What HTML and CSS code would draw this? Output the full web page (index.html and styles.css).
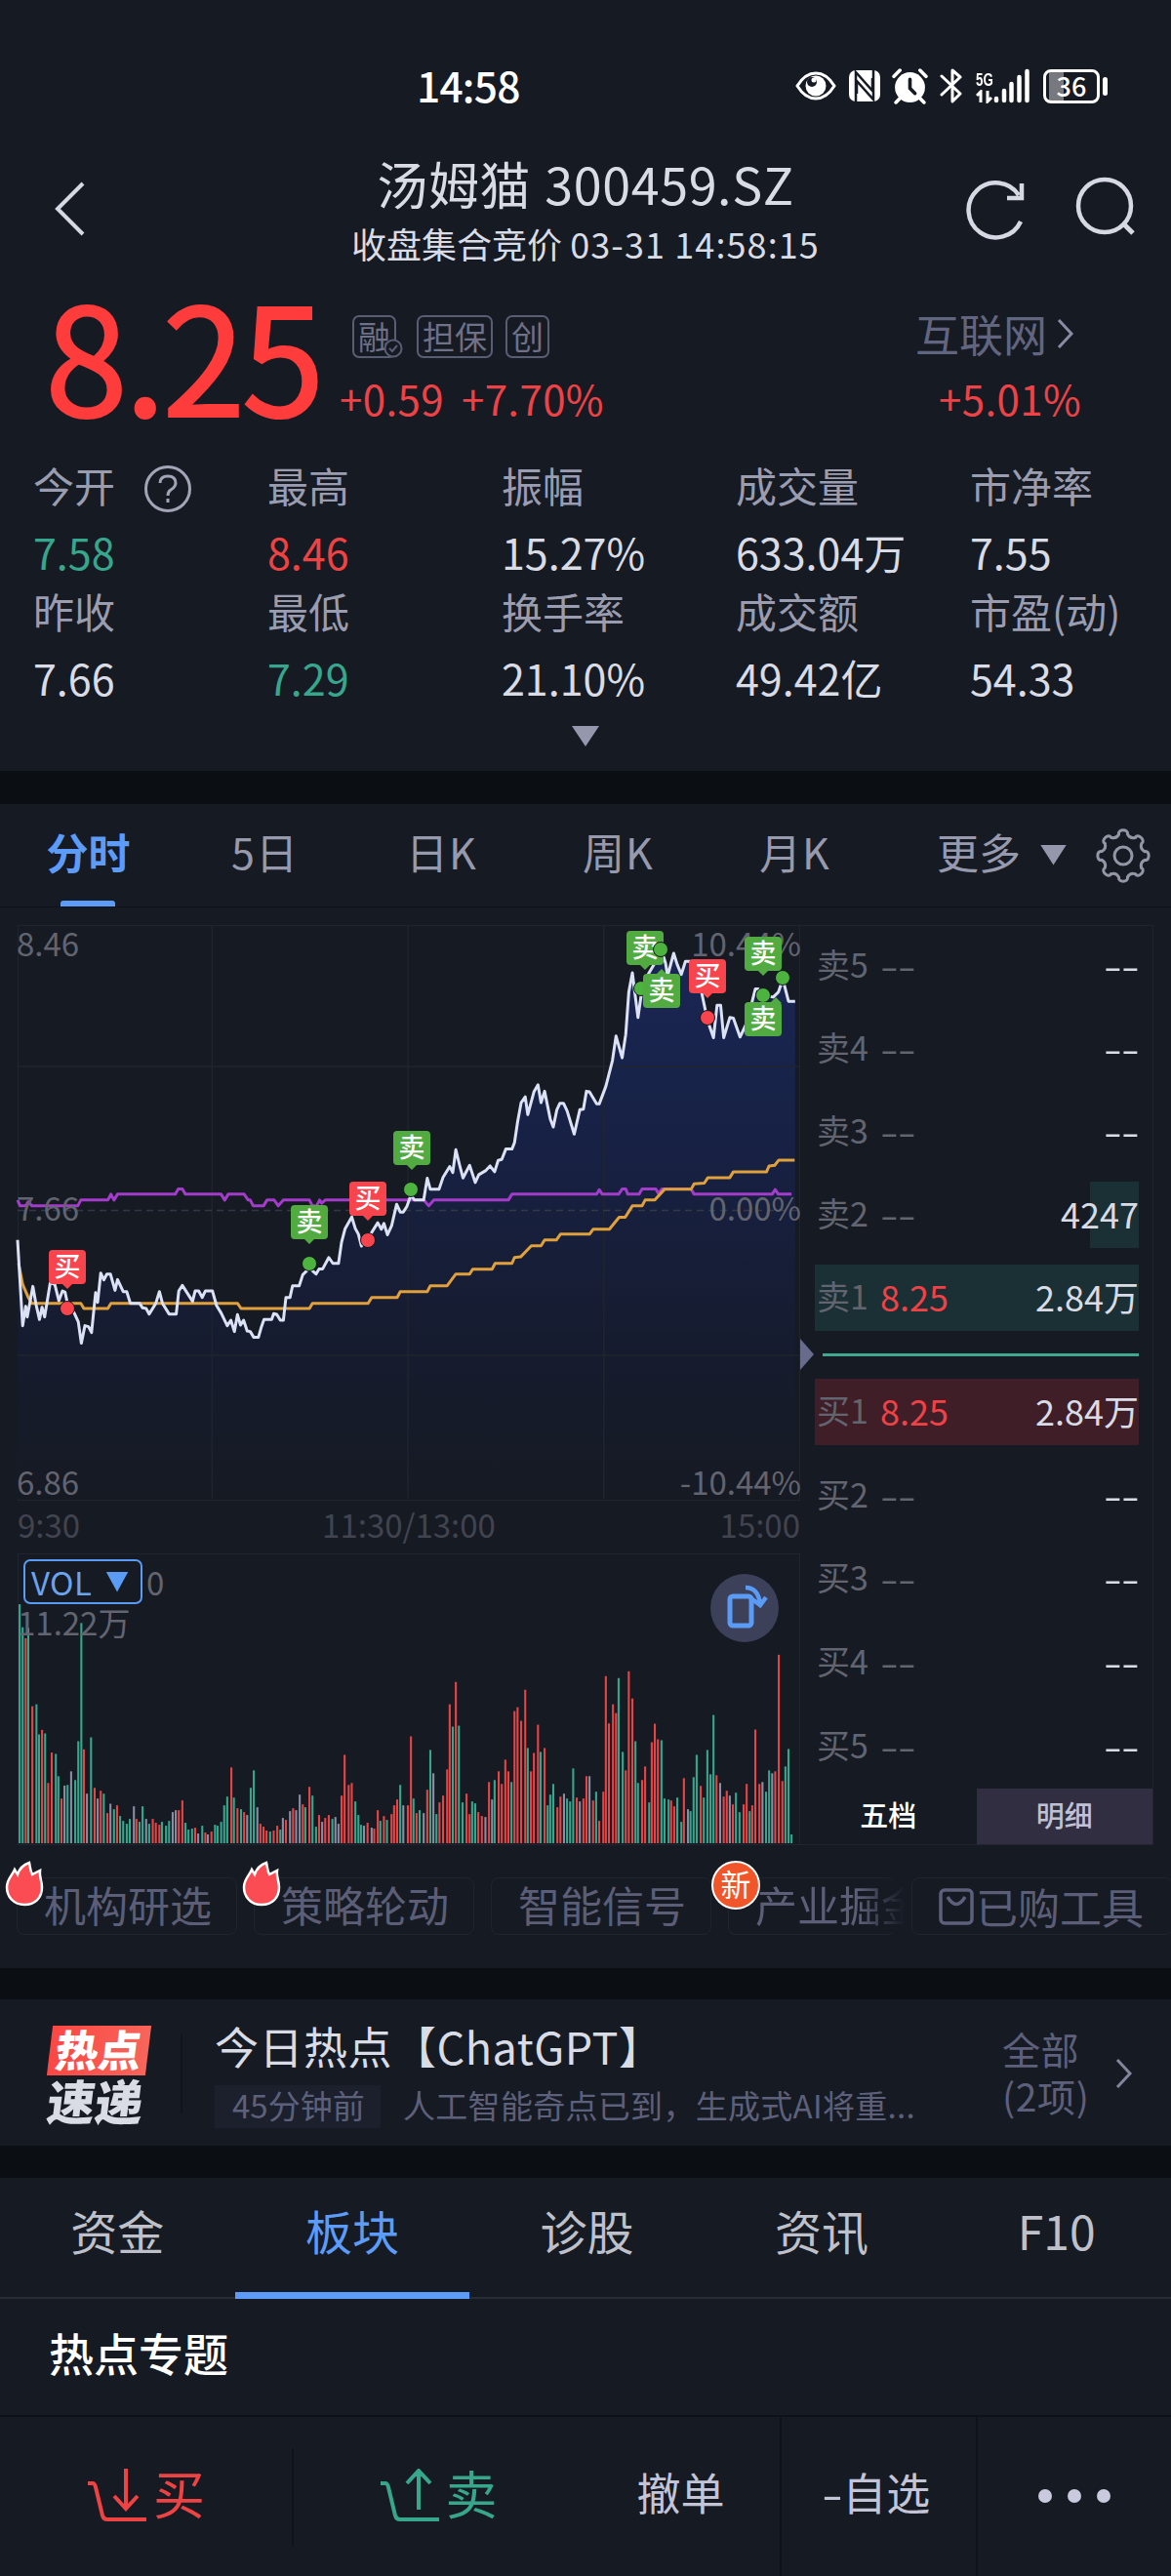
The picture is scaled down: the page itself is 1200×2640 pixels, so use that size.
FILE: index.html
```html
<!DOCTYPE html>
<html lang="zh-CN">
<head>
    <meta charset="utf-8">
    <title>汤姆猫 300459.SZ</title>
    <link rel="stylesheet" href="styles.css">
</head>
<body>
    <div class="status-bar">
        <span class="clock">14:58</span>
        <div class="status-icons">
            <svg class="ic-eye" viewBox="0 0 42 30"><path d="M2 15Q10 2 21 2T40 15Q32 28 21 28T2 15Z" fill="none" stroke="#fff" stroke-width="3"/><circle cx="21" cy="15" r="10.500" fill="#fff"/><circle cx="17" cy="11" r="5" fill="#161a23"/><circle cx="19" cy="9" r="2.500" fill="#fff"/></svg>
            <svg class="ic-nfc" viewBox="0 0 34 34"><rect x="1" y="1" width="32" height="32" rx="7" fill="#fff"/><path d="M8 33V3L25 22V9M26 1V31L9 12V25" fill="none" stroke="#161a23" stroke-width="2.500"/></svg>
            <svg class="ic-alarm" viewBox="0 0 36 36"><circle cx="18" cy="19" r="15" fill="#fff"/><path d="M2 8L8 2M34 8L28 2M8 30L4 34M28 30L32 34" stroke="#fff" stroke-width="3.500" stroke-linecap="round"/><path d="M18 11V20L23 25" fill="none" stroke="#161a23" stroke-width="3.500" stroke-linecap="round"/></svg>
            <svg class="ic-bt" viewBox="0 0 24 38"><path d="M2 9L21 27L13 35V3L21 10L2 28" fill="none" stroke="#fff" stroke-width="3" stroke-linejoin="round" stroke-linecap="round"/></svg>
            <div class="signal">
                <div class="net"><span>5G</span><svg viewBox="0 0 18 12"><path d="M5 12V1L1 5M12 0V11L16 7" fill="none" stroke="#fff" stroke-width="3"/></svg></div>
                <svg class="bars" viewBox="0 0 37 36"><path d="M3 31V33M11 23V33M18.500 16V33M26.500 9V33M34.500 3V33" stroke="#fff" stroke-width="4.500" stroke-linecap="round"/></svg>
            </div>
            <div class="battery"><span>36</span></div>
        </div>
    </div>

    <header class="title-bar">
        <svg class="back" viewBox="0 0 32 58"><path d="M29 3L3 29L29 55" fill="none" stroke="#d6d9e3" stroke-width="4"/></svg>
        <div class="title">
            <h1>汤姆猫 300459.SZ</h1>
            <p>收盘集合竞价 <span>03-31 14:58:15</span></p>
        </div>
        <div class="title-actions">
            <svg class="refresh" viewBox="0 0 62 62"><path d="M56 43A28 28 0 1 1 54 16M57 4V19H42" fill="none" stroke="#d6d9e3" stroke-width="4.500"/></svg>
            <svg class="search" viewBox="0 0 62 62"><circle cx="30" cy="30" r="27" fill="none" stroke="#d6d9e3" stroke-width="4.500"/><path d="M49 48L59 58" stroke="#d6d9e3" stroke-width="5"/></svg>
        </div>
    </header>

    <section class="quote">
        <div class="price">8.25</div>
        <div class="quote-mid">
            <div class="tags">
                <span class="tag tag-rong">融<svg viewBox="0 0 20 20"><circle cx="10" cy="10" r="8.500" fill="#161a23" stroke="#595d73" stroke-width="2"/><path d="M6 10L9 13L14 7" fill="none" stroke="#595d73" stroke-width="2"/></svg></span>
                <span class="tag">担保</span>
                <span class="tag">创</span>
            </div>
            <div class="change"><span>+0.59</span><span>+7.70%</span></div>
        </div>
        <div class="sector">
            <div class="sector-name">互联网<svg viewBox="0 0 18 32"><path d="M2 2L15 16L2 30" fill="none" stroke="#898ca3" stroke-width="3"/></svg></div>
            <div class="sector-change">+5.01%</div>
        </div>
    </section>

    <section class="stats">
        <div><label>今开<svg viewBox="0 0 50 50"><circle cx="25" cy="25" r="22.500" fill="none" stroke="#a3a4b5" stroke-width="3"/><path d="M17 19Q17 12 25 12T33 19Q33 23 28 26Q25 28 25 32M25 35V39" fill="none" stroke="#a3a4b5" stroke-width="3"/></svg></label><b class="down">7.58</b><label>昨收</label><b>7.66</b></div>
        <div><label>最高</label><b class="up">8.46</b><label>最低</label><b class="down">7.29</b></div>
        <div><label>振幅</label><b>15.27%</b><label>换手率</label><b>21.10%</b></div>
        <div><label>成交量</label><b>633.04万</b><label>成交额</label><b>49.42亿</b></div>
        <div><label>市净率</label><b>7.55</b><label>市盈(动)</label><b>54.33</b></div>
    </section>
    <div class="expand"><i class="tri"></i></div>

    <nav class="period-tabs">
        <span class="active">分时</span>
        <span>5日</span>
        <span>日K</span>
        <span>周K</span>
        <span>月K</span>
        <span class="more">更多<i class="tri"></i></span>
        <svg class="gear" viewBox="-28 -28 56 56">
            <defs><path id="tooth" d="M22.100 -4.400C27.500 -6 27.500 6 22.100 4.400Q17 7 18.700 12.500"/></defs>
            <g fill="none" stroke="#9496a6" stroke-width="3" stroke-linecap="round">
                <use href="#tooth"/><use href="#tooth" transform="rotate(45)"/><use href="#tooth" transform="rotate(90)"/><use href="#tooth" transform="rotate(135)"/>
                <use href="#tooth" transform="rotate(180)"/><use href="#tooth" transform="rotate(225)"/><use href="#tooth" transform="rotate(270)"/><use href="#tooth" transform="rotate(315)"/>
                <circle r="9"/>
            </g>
        </svg>
    </nav>

    <section class="market">
        <div class="charts">
            <div class="price-chart" id="price-chart">
                <svg class="plot" viewBox="34 443 1532 1767" preserveAspectRatio="none">
                    <defs>
                        <linearGradient id="fade" x1="0" y1="0" x2="0" y2="1">
                            <stop offset="0" stop-color="#1a2755"/>
                            <stop offset="0.350" stop-color="#172144"/>
                            <stop offset="0.700" stop-color="#161c30"/>
                            <stop offset="1" stop-color="#161a23"/>
                        </linearGradient>
                    </defs>
                    <path id="area" fill="url(#fade)"/>
                    <path class="grid" d="M415 443V2210M799 443V2210M1183 443V2210M34 879H1566M34 1768H1566"/>
                    <path class="grid mid" d="M34 1322H1566"/>
                    <polyline class="line index" id="line-index"/>
                    <polyline class="line avg" id="line-avg"/>
                    <polyline class="line last" id="line-last"/>
                </svg>
                <div class="axis"><span>8.46</span><span>10.44%</span></div>
                <div class="axis axis-mid"><span>7.66</span><span>0.00%</span></div>
                <div class="axis"><span>6.86</span><span>-10.44%</span></div>
            </div>
            <div class="times"><span>9:30</span><span>11:30/13:00</span><span>15:00</span></div>
            <div class="vol-chart">
                <svg class="plot" id="volume" viewBox="34 95 1532 895" preserveAspectRatio="none"></svg>
                <div class="vol-head"><span class="vol-select">VOL<i class="tri"></i></span><span>0</span></div>
                <div class="vol-max">11.22万</div>
                <div class="rotate">
                    <svg viewBox="0 0 44 46"><rect x="4" y="12" width="22" height="30" rx="3" fill="none" stroke="#5a9bf6" stroke-width="5"/><path d="M20 3Q33 3 35 20M27 15L35 21L41 13" fill="none" stroke="#5a9bf6" stroke-width="4.500"/></svg>
                </div>
            </div>
        </div>
        <div class="book">
            <div class="row"><span>卖5</span><em>--</em><strong class="none">--</strong></div>
            <div class="row"><span>卖4</span><em>--</em><strong class="none">--</strong></div>
            <div class="row"><span>卖3</span><em>--</em><strong class="none">--</strong></div>
            <div class="row ask-part"><span>卖2</span><em>--</em><strong>4247</strong></div>
            <div class="row ask"><span>卖1</span><b>8.25</b><strong>2.84万</strong></div>
            <div class="spread"></div>
            <div class="row bid"><span>买1</span><b>8.25</b><strong>2.84万</strong></div>
            <div class="row"><span>买2</span><em>--</em><strong class="none">--</strong></div>
            <div class="row"><span>买3</span><em>--</em><strong class="none">--</strong></div>
            <div class="row"><span>买4</span><em>--</em><strong class="none">--</strong></div>
            <div class="row"><span>买5</span><em>--</em><strong class="none">--</strong></div>
            <div class="book-tabs"><span>五档</span><span class="detail">明细</span></div>
        </div>
    </section>

    <section class="tools">
        <div class="chip"><svg class="flame" viewBox="0 0 40 47"><path d="M20 45C9 45 2 37 2 27C2 19 7 16 10 9L13 14C15 8 19 4 25 2C26 7 26 10 28 14L36 10C35 17 38 20 38 27C38 38 31 45 20 45Z" fill="#fb4c53" stroke="#fff" stroke-width="2.500"/></svg>机构研选</div>
        <div class="chip"><svg class="flame" viewBox="0 0 40 47"><path d="M20 45C9 45 2 37 2 27C2 19 7 16 10 9L13 14C15 8 19 4 25 2C26 7 26 10 28 14L36 10C35 17 38 20 38 27C38 38 31 45 20 45Z" fill="#fb4c53" stroke="#fff" stroke-width="2.500"/></svg>策略轮动</div>
        <div class="chip">智能信号</div>
        <div class="chip cut"><i class="new">新</i><span>产业掘金</span></div>
        <div class="chip bought"><svg viewBox="0 0 36 38"><rect x="2" y="2" width="32" height="34" rx="4" fill="none" stroke="#5d607a" stroke-width="3.500"/><path d="M9 9Q18 24 27 9" fill="none" stroke="#5d607a" stroke-width="3.500"/></svg>已购工具</div>
    </section>

    <section class="news">
        <div class="news-logo"><span class="hot">热点</span><span class="fast">速递</span></div>
        <div class="news-body">
            <h2>今日热点【ChatGPT】</h2>
            <p><span class="ago">45分钟前</span><span class="desc">人工智能奇点已到，生成式AI将重...</span></p>
        </div>
        <div class="news-all"><span>全部</span><span>(2项)</span></div>
        <svg class="news-arrow" viewBox="0 0 18 32"><path d="M2 2L15 16L2 30" fill="none" stroke="#83869b" stroke-width="3"/></svg>
    </section>

    <nav class="info-tabs">
        <span>资金</span><span class="active">板块</span><span>诊股</span><span>资讯</span><span>F10</span>
    </nav>
    <h3 class="topic">热点专题</h3>

    <footer class="actions">
        <div class="act-buy"><svg viewBox="0 0 62 56"><path d="M1 15H6Q8 15 9 19L16 48Q17 52 21 52H61M40 0V41M28 28L40 41L52 28" fill="none" stroke="#ef4343" stroke-width="4"/></svg>买</div>
        <div class="act-sell"><svg viewBox="0 0 62 56"><path d="M1 15H6Q8 15 9 19L16 48Q17 52 21 52H61M40 42V3M28 15L40 2L52 15" fill="none" stroke="#36a68c" stroke-width="4"/></svg>卖</div>
        <div class="small">撤单</div>
        <div class="small"><em>-</em>自选</div>
        <div class="dots"><i></i><i></i><i></i></div>
    </footer>

    <script src="chart.js"></script>
</body>
</html>
```
FILE: styles.css
```css
* {
    box-sizing: border-box;
}
body {
    margin: 0;
    width: 1200px;
    background: #161a23;
    color: #d9dce5;
    font-family: "Noto Sans CJK SC", "Noto Sans", sans-serif;
    font-size: 42px;
    line-height: 1;
    white-space: nowrap;
}
h1, h2, h3, p {
    margin: 0;
    font-weight: 400;
}
svg {
    display: block;
    flex: none;
}
b, strong {
    font-weight: 400;
}
em, i {
    font-style: normal;
}
.tri {
    width: 28px;
    height: 21px;
    background: #9597ad;
    clip-path: polygon(0 0, 100% 0, 50% 100%);
}
.up { color: #ef4343; }
.down { color: #36a68c; }

/* status bar */
.status-bar {
    height: 150px;
    padding: 26px 65px 0 427px;
    display: flex;
    align-items: center;
    justify-content: space-between;
    color: #fff;
}
.clock {
    margin-top: -2px;
    font-size: 42.5px;
    font-weight: 500;
    letter-spacing: -0.8px;
}
.status-icons {
    display: flex;
    align-items: center;
}
.ic-eye { width: 42px; height: 30px; }
.ic-nfc { width: 34px; height: 34px; margin-left: 12px; }
.ic-alarm { width: 37px; height: 37px; margin-left: 11px; }
.ic-bt { width: 24px; height: 38px; margin-left: 12px; }
.signal {
    display: flex;
    align-items: flex-end;
    margin-left: 13px;
    height: 36px;
}
.net {
    width: 18px;
    font: 700 19px/20px "Liberation Sans", sans-serif;
}
.net span {
    display: block;
    transform: scaleX(0.7);
    transform-origin: left;
}
.net svg { width: 18px; height: 14px; }
.bars { width: 37px; height: 36px; }
.battery {
    position: relative;
    width: 58px;
    height: 35px;
    margin: 0 8px 0 14px;
    border: 3px solid #fff;
    border-radius: 8px;
    background: linear-gradient(90deg, #161a23 3px, #77797e 3px, #77797e 18px, #161a23 18px);
    font-size: 27px;
    font-weight: 500;
    line-height: 27px;
    text-align: center;
}
.battery::after {
    content: "";
    position: absolute;
    right: -11px;
    top: 5px;
    width: 5px;
    height: 19px;
    border-radius: 3px;
    background: #fff;
}

/* title */
.title-bar {
    height: 140px;
    padding: 0 19px;
    display: grid;
    grid-template-columns: 1fr auto 1fr;
}
.back {
    width: 32px;
    height: 58px;
    margin: 35px 0 0 37px;
}
.title {
    text-align: center;
    padding-top: 8px;
}
.title h1 {
    font-size: 52px;
    line-height: 60px;
    letter-spacing: 0.6px;
    word-spacing: 2px;
}
.title p {
    font-size: 36px;
    line-height: 56px;
    margin-top: 3px;
}
.title p span {
    letter-spacing: 1.1px;
}
.title-actions {
    display: flex;
    justify-content: flex-end;
    gap: 50px;
    padding: 31px 17px 0 0;
}
.title-actions svg {
    width: 62px;
    height: 62px;
}
.refresh { margin-top: 3px; }

/* quote */
.quote {
    height: 160px;
    display: flex;
    padding-left: 46px;
}
.price {
    width: 302px;
    font-size: 153px;
    line-height: 141px;
    letter-spacing: -3.5px;
    color: #ff3c3c;
    -webkit-text-stroke: 2px #ff3c3c;
}
.tags {
    display: flex;
    margin: 33px 0 0 13px;
}
.tag {
    position: relative;
    height: 44px;
    padding: 0 4px;
    margin-right: 13px;
    border: 2px solid #595d73;
    border-radius: 7px;
    font-size: 33px;
    line-height: 38px;
    color: #6e7188;
}
.tag-rong {
    margin-right: 21px;
}
.tag svg {
    position: absolute;
    right: -9px;
    bottom: -2px;
    width: 20px;
    height: 20px;
}
.change, .sector-change {
    color: #ee4247;
    letter-spacing: 0.4px;
}
.change {
    display: flex;
    gap: 18px;
    margin-top: 20px;
}
.sector {
    margin-left: auto;
    padding: 28px 92px 0 0;
    text-align: right;
}
.sector-name {
    display: flex;
    align-items: center;
    gap: 10px;
    font-size: 45px;
    line-height: 48px;
    color: #62657f;
    margin-right: 7px;
}
.sector-name svg {
    width: 18px;
    height: 32px;
}
.sector-change {
    margin-top: 21px;
}

/* stats */
.stats {
    height: 277px;
    padding: 14px 0 0 34px;
    display: grid;
    grid-template-columns: repeat(5, 240px);
}
.stats > div {
    display: flex;
    flex-direction: column;
}
.stats label {
    display: flex;
    align-items: center;
    gap: 29px;
    height: 66px;
    color: #9a9cb0;
}
.stats label svg {
    width: 50px;
    height: 50px;
    margin-top: 8px;
}
.stats b {
    height: 63px;
    font-size: 43px;
    line-height: 71px;
}
.expand {
    height: 97px;
    padding-top: 17px;
    border-bottom: 34px solid #0b0e13;
    display: flex;
    justify-content: center;
}

/* period tabs */
.period-tabs {
    height: 106px;
    border-bottom: 1px solid #0e1117;
    display: flex;
    align-items: center;
    color: #9799ad;
    font-size: 43px;
}
.period-tabs > span {
    width: 181px;
    height: 106px;
    line-height: 96px;
    text-align: center;
    letter-spacing: 1px;
}
.period-tabs > .active {
    position: relative;
    color: #5c9cf8;
    font-weight: 700;
    letter-spacing: 0;
}
.period-tabs .active::after {
    content: "";
    position: absolute;
    left: 62px;
    bottom: 1px;
    width: 56px;
    height: 6px;
    border-radius: 3px 3px 0 0;
    background: #5c9cf8;
}
.period-tabs > .more {
    width: 200px;
    margin-left: 18px;
    padding: 0 0 9px 37px;
    display: flex;
    align-items: center;
    gap: 20px;
    letter-spacing: 0;
}
.more .tri {
    width: 27px;
    margin-top: 8px;
}
.gear {
    width: 56px;
    height: 56px;
}

/* charts */
.market {
    display: flex;
    height: 961px;
    padding: 18px 18px 0;
}
.charts {
    width: 802px;
}
.price-chart {
    position: relative;
    height: 590px;
    padding-bottom: 2px;
    border: 1px solid #20242e;
    display: flex;
    flex-direction: column;
    justify-content: space-between;
}
.plot {
    position: absolute;
    left: -1px;
    top: -1px;
    width: 801px;
    height: 100%;
    overflow: visible;
}
.grid {
    fill: none;
    stroke: #20242e;
    stroke-width: 1.5;
    vector-effect: non-scaling-stroke;
}
.grid.mid {
    stroke: #333847;
    stroke-dasharray: 7 5;
}
.line {
    fill: none;
    stroke-width: 3;
    stroke-linejoin: round;
    vector-effect: non-scaling-stroke;
}
.last { stroke: #dbe2f6; }
.avg { stroke: #e0a03c; }
.index { stroke: #a33ccb; }
.axis {
    position: relative;
    display: flex;
    justify-content: space-between;
    margin: 0 -2px 0 -2px;
    font-size: 33px;
    line-height: 34px;
    color: #62646f;
}
.axis-mid {
    margin-bottom: 10px;
}
.marker {
    position: absolute;
    width: 38px;
    height: 35px;
    border-radius: 4px;
    background: #52ab41;
    color: #fff;
    font-size: 27px;
    font-weight: 500;
    line-height: 32px;
    text-align: center;
}
.marker::after {
    content: "";
    position: absolute;
    left: 13px;
    top: 34px;
    border: 6px solid transparent;
    border-top-color: #52ab41;
    border-bottom: 0;
}
.marker.flip::after {
    top: -5px;
    border-top: 0;
    border-bottom: 6px solid #52ab41;
}
.marker.corner::after {
    left: 26px;
}
.marker.buy {
    background: #f8454d;
}
.marker.buy::after {
    border-top-color: #f8454d;
}
.dot {
    position: absolute;
    width: 16px;
    height: 16px;
    border: 1px solid #11151c;
    border-radius: 50%;
    background: #4cb33f;
}
.dot.buy {
    background: #f8454d;
}
.times {
    height: 54px;
    display: grid;
    grid-template-columns: 1fr auto 1fr;
    font-size: 33px;
    line-height: 48px;
    color: #41444f;
}
.times span:last-child {
    text-align: right;
}
.vol-chart {
    position: relative;
    height: 299px;
    border: 1px solid #20242e;
    padding: 5px;
    font-size: 33px;
    color: #62646f;
}
.vol-head {
    position: relative;
    display: flex;
    align-items: center;
    gap: 4px;
}
.vol-select {
    display: flex;
    align-items: center;
    gap: 14px;
    width: 122px;
    height: 46px;
    padding-left: 6px;
    border: 2px solid #5a9bf6;
    border-radius: 7px;
    line-height: 42px;
    letter-spacing: 0.5px;
    color: #6ba3ee;
}
.vol-select .tri {
    width: 23px;
    background: #5a9bf6;
}
.vol-max {
    position: relative;
    margin: 0 0 0 -6px;
    line-height: 36px;
}
.rotate {
    position: absolute;
    right: 21px;
    top: 20px;
    width: 70px;
    height: 70px;
    padding: 11px 0 0 16px;
    border-radius: 50%;
    background: #3c4058;
}
.rotate svg {
    width: 44px;
    height: 46px;
}

/* order book */
.book {
    width: 362px;
    height: 943px;
    border: 1px solid #20242e;
    border-left: 0;
    display: flex;
    flex-direction: column;
}
.row {
    flex: none;
    height: 68px;
    margin: 0 14px 17px 15px;
    padding: 0 0 4px 2px;
    display: flex;
    align-items: center;
    font-size: 36px;
    line-height: 64px;
}
.row:first-child {
    margin-top: 7px;
}
.row span {
    width: 65px;
    font-size: 34px;
    color: #62646f;
}
.row em {
    color: #62646f;
}
.row em, .row .none {
    transform: scaleX(1.5);
    transform-origin: left;
    letter-spacing: -0.5px;
}
.row .none {
    transform-origin: right;
}
.row b {
    color: #ee4247;
}
.row strong {
    margin-left: auto;
}
.ask-part {
    background: linear-gradient(#1a3034, #1a3034) right / 50px 100% no-repeat;
}
.ask {
    background: #1b3035;
    margin-bottom: 0;
}
.bid {
    background: #401e27;
}
.spread {
    position: relative;
    flex: none;
    height: 3px;
    margin: 23px 14px 23px 23px;
    background: #3fa891;
}
.spread ~ .row {
    margin-bottom: 17.7px;
}
.spread::before {
    content: "";
    position: absolute;
    left: -23px;
    top: -15px;
    border: 16px solid transparent;
    border-left: 14px solid #686b8c;
    border-right: 0;
}
.spread ~ .row:nth-last-child(2) {
    margin-bottom: 0;
}
.book-tabs {
    display: flex;
    margin-top: auto;
    height: 57px;
    font-size: 29px;
    font-weight: 500;
    line-height: 53px;
    text-align: center;
    color: #fff;
}
.book-tabs span {
    width: 181px;
}
.book-tabs .detail {
    background: #302e40;
    color: #bfc1d4;
}

/* tools */
.tools {
    height: 158px;
    padding: 33px 0 0 17px;
    border-bottom: 32px solid #0b0e13;
    display: flex;
    gap: 17px;
    color: #5b5e76;
    font-size: 43px;
}
.chip {
    position: relative;
    width: 226px;
    height: 59px;
    padding-left: 27px;
    border: 1px solid #20242e;
    border-radius: 8px;
    line-height: 53px;
    flex: none;
}
.flame {
    position: absolute;
    left: -13px;
    top: -18px;
    width: 40px;
    height: 47px;
}
.cut {
    width: 171px;
    border-right: 0;
}
.cut span {
    display: block;
    width: 153px;
    overflow: hidden;
    -webkit-mask-image: linear-gradient(90deg, #000 70%, transparent);
    mask-image: linear-gradient(90deg, #000 70%, transparent);
}
.new {
    position: absolute;
    left: -18px;
    top: -18px;
    width: 50px;
    height: 50px;
    border: 2px solid #fff;
    border-radius: 50%;
    background: #f1562b;
    color: #fff;
    font-size: 31px;
    line-height: 42px;
    text-align: center;
}
.bought {
    display: flex;
    align-items: center;
    width: 268px;
    gap: 2px;
}
.bought svg {
    width: 36px;
    height: 38px;
}

/* news */
.news {
    height: 183px;
    border-bottom: 33px solid #0b0e13;
    padding-left: 48px;
    display: flex;
}
.news-logo {
    width: 139px;
    height: 82px;
    margin-top: 35px;
    border-right: 2px solid #11141b;
}
.news-logo span {
    display: block;
    width: 101px;
    font-weight: 900;
    transform: skewX(-7deg);
}
.hot {
    height: 51px;
    margin: -8px 0 0 3px;
    padding-left: 6px;
    background: linear-gradient(90deg, #fb4743, #f7655a);
    font-size: 44px;
    line-height: 46px;
    color: #fff;
}
.fast {
    margin-left: 1px;
    font-size: 49px;
    line-height: 50px;
}
.news-body {
    width: 790px;
    padding: 23px 0 0 33px;
}
.news-body h2 {
    font-size: 45px;
    line-height: 49px;
    letter-spacing: 0.5px;
}
.news-body p {
    display: flex;
    gap: 23px;
    margin-top: 16px;
    font-size: 33px;
    line-height: 41px;
    color: #5d607a;
}
.desc {
    letter-spacing: 0.3px;
}
.ago {
    width: 170px;
    height: 44px;
    padding-left: 18px;
    background: #1c202d;
}
.news-all {
    width: 116px;
    padding-top: 26px;
    display: flex;
    flex-direction: column;
    margin-left: 50px;
    font-size: 39px;
    line-height: 48px;
    letter-spacing: 0.6px;
    color: #5d607a;
}
.news-arrow {
    width: 18px;
    height: 32px;
    margin-top: 60px;
}

/* info tabs */
.info-tabs {
    display: grid;
    grid-template-columns: repeat(5, 240.6px);
    height: 124px;
    border-bottom: 2px solid #282c36;
    font-size: 48px;
    line-height: 106px;
    text-align: center;
    color: #bfc1ca;
}
.info-tabs .active {
    height: 124px;
    border-bottom: 7px solid #5c9cf8;
    color: #5c9cf8;
}
.topic {
    height: 119px;
    padding-left: 50px;
    font-size: 46px;
    font-weight: 500;
    line-height: 108px;
    color: #fff;
}

/* bottom actions */
.actions {
    height: 165px;
    border-top: 2px solid #0e1117;
    display: grid;
    grid-template-columns: 299px 300px 200px 201px 200px;
    line-height: 154px;
}
.actions > div {
    display: flex;
    justify-content: center;
    border-left: 2px solid #0f1219;
}
.actions > div:nth-child(1), .actions > div:nth-child(3) {
    border: 0;
}
.actions svg {
    width: 62px;
    height: 56px;
    margin: 53px 6px 0 0;
}
.act-buy, .act-sell {
    font-size: 53px;
}
.act-buy {
    color: #ef4343;
}
.actions .act-sell {
    color: #36a68c;
    border-left: 0;
    background: linear-gradient(#10131a, #10131a) 0 32px / 2px 100px no-repeat;
}
.small {
    font-size: 45px;
    color: #c3c5d6;
}
.actions .small {
    padding-right: 3px;
}
.small em {
    transform: scaleX(1.4);
    margin-right: 3px;
}
.dots {
    gap: 16px;
    padding-top: 74px;
}
.dots i {
    width: 14px;
    height: 14px;
    border-radius: 50%;
    background: #c9cade;
}
```
FILE: chart.js
```js
// price, average and index lines, one point per turn
const last = '34,1413 44,1677 50,1617 53,1650 64,1556 70,1610 77,1658 82,1620 87,1650 98,1545 107,1550 115,1600 122,1570 127,1573 132,1610 145,1638 153,1665 159,1731 166,1677 173,1680 179,1698 187,1575 191,1605 197,1515 203,1536 209,1518 216,1518 225,1568 230,1535 241,1572 248,1572 255,1608 273,1608 279,1622 286,1624 292,1641 305,1608 312,1572 318,1608 331,1641 345,1641 350,1570 357,1553 377,1602 382,1570 389,1570 396,1590 402,1570 416,1570 424,1615 433,1638 445,1677 452,1660 459,1695 465,1643 471,1675 477,1660 484,1693 490,1695 497,1713 506,1713 512,1680 517,1658 532,1658 536,1640 542,1642 549,1660 555,1660 560,1590 568,1590 573,1554 586,1554 593,1520 606,1500 619,1518 625,1502 632,1502 644,1467 652,1485 663,1485 669,1420 676,1378 689,1342 696,1378 702,1395 708,1432 720,1410 740,1360 747,1380 752,1362 759,1397 767,1370 777,1303 784,1327 790,1327 797,1310 805,1275 812,1290 830,1290 837,1223 843,1257 860,1257 868,1220 881,1187 887,1205 893,1135 900,1180 907,1222 920,1183 931,1236 938,1212 951,1200 960,1185 969,1203 976,1168 983,1165 991,1133 1003,1133 1008,1113 1014,1050 1021,990 1029,972 1034,1027 1046,957 1054,935 1060,990 1067,955 1078,1040 1084,1065 1091,1012 1097,992 1104,992 1111,1015 1125,1087 1136,1012 1143,1010 1149,955 1155,957 1169,994 1174,994 1187,940 1200,860 1207,785 1219,852 1226,780 1232,650 1239,590 1250,728 1258,640 1268,600 1283,560 1296,520 1304,560 1308,600 1320,530 1327,565 1335,595 1343,555 1352,555 1368,600 1376,660 1386,735 1398,790 1405,690 1412,690 1418,790 1430,728 1437,730 1450,788 1463,745 1480,640 1486,640 1495,660 1515,665 1525,650 1534,610 1545,678 1558,678';
const avg = '36,1485 44,1550 55,1590 62,1608 158,1608 164,1624 211,1624 217,1608 465,1608 472,1624 606,1624 612,1608 721,1608 728,1590 778,1590 784,1572 837,1572 843,1554 876,1554 893,1518 920,1518 926,1503 964,1503 970,1485 1003,1485 1008,1467 1020,1465 1041,1431 1060,1431 1067,1413 1090,1413 1098,1395 1155,1395 1162,1380 1194,1380 1213,1343 1225,1343 1239,1308 1258,1308 1264,1290 1283,1290 1302,1257 1354,1257 1360,1240 1380,1238 1387,1221 1430,1221 1437,1203 1502,1203 1507,1185 1518,1183 1526,1167 1557,1167';
const index = '34,1290 39,1308 50,1308 55,1295 62,1308 152,1308 158,1290 211,1290 217,1272 223,1290 230,1272 343,1272 349,1256 357,1256 363,1272 433,1272 440,1290 447,1272 478,1272 486,1290 490,1290 496,1308 516,1308 523,1290 537,1290 545,1308 555,1290 606,1290 612,1308 620,1308 626,1290 630,1300 637,1290 830,1290 840,1308 850,1290 996,1290 1003,1272 1169,1272 1174,1258 1180,1272 1212,1272 1219,1256 1226,1256 1230,1272 1252,1272 1258,1256 1285,1256 1290,1270 1297,1256 1354,1256 1360,1272 1513,1272 1519,1258 1525,1272 1551,1272';

document.getElementById('line-last').setAttribute('points', last);
document.getElementById('line-avg').setAttribute('points', avg);
document.getElementById('line-index').setAttribute('points', index);
document.getElementById('area').setAttribute('d', 'M' + last + ' 1558,2210 34,2210Z');

// trades: dots first so the labels lie over them
const dots = [
    [657, 1013, ''], [725, 1043, 'buy'], [802, 1002, ''], [782, 1020, ''],
    [69, 1341, 'buy'], [317, 1295, ''], [377, 1271, 'buy'], [421, 1219, '']
];
const markers = [
    [642, 954, ''], [659, 998, 'flip'], [706, 983, 'buy'], [763, 960, ''], [763, 1027, 'flip corner'],
    [50, 1281, 'buy'], [298, 1235, ''], [358, 1211, 'buy'], [403, 1159, '']
];
const chart = document.getElementById('price-chart');

function addDot([x, y, type]) {
    const el = document.createElement('i');
    el.className = 'dot ' + type;
    el.style.left = (x - 27) + 'px';
    el.style.top = (y - 957) + 'px';
    chart.appendChild(el);
}

dots.forEach(addDot);
markers.forEach(([x, y, type]) => {
    const el = document.createElement('span');
    el.className = 'marker ' + type;
    el.textContent = type === 'buy' ? '买' : '卖';
    el.style.left = (x - 19) + 'px';
    el.style.top = (y - 949) + 'px';
    chart.appendChild(el);
});
addDot([677, 973, '']);

// volume: position, g/r/w colour, top of the bar
const volume = '38g252 44g323 50r357 55g325 63r567 71g561 76g654 82r640 88g651 94r804 101r710 109g714 114g783 120r852 126w812 132g810 139w768 147g795 153g675 159g310 164r700 170w837 178g663 185r819 191w852 197r828 203g837 210r897 216w868 223g885 229r873 235g906 241g921 248g930 254g915 262w876 267r915 273g924 279g876 286w915 292g930 299r915 305r927 312r933 317g924 325g936 331g921 338w894 344w888 350r888 357r858 363g927 369g948 376g945 382r942 388w960 396g936 402r957 407w963 414r954 421g933 426g936 433g924 439g873 445g846 453r756 458g849 465r882 472g885 478r894 484w903 491g819 497g765 504w879 510r930 516r939 522r951 529g954 536r951 543r936 549g948 554w912 560r918 568w891 574r882 580w888 587w840 593r870 598g879 606r816 612g843 619g939 625r903 631w924 637r912 644r903 651g915 657w909 663w930 669r843 675r717 683r810 689r804 696g861 702g903 707g933 713w936 720r927 728w942 733r945 740r888 745g921 752r906 758g918 767r900 772r873 778r855 784g810 790w873 799r873 805r660 810g852 816r897 822g888 830w897 837r825 843g702 849w774 855g900 861r864 868r843 876r762 881r561 887g630 893r492 899g627 906g864 914r837 920r900 925g861 931g867 937r894 944r906 951w909 958r801 964w855 969g795 977r768 983r807 990r732 996r768 1002g801 1008r582 1014r570 1021r612 1029r516 1034g696 1040r768 1046r711 1054r624 1059g708 1067r696 1073g873 1078g840 1084g807 1092r879 1098r846 1105w837 1111g852 1117g861 1123g759 1130r849 1136w861 1143r852 1149r783 1155w783 1162r858 1168g831 1174r921 1182r831 1187r474 1193r620 1201r561 1207r588 1212g480 1220g708 1226r765 1232r459 1239r543 1245g675 1250g804 1258r795 1264r753 1272g864 1277r678 1283r621 1289r669 1296g672 1302g852 1310g855 1315r858 1321r876 1327g849 1335g924 1340r789 1348w885 1353g891 1359g786 1365g717 1373r813 1379g849 1386g702 1392g777 1398g594 1404r780 1411w804 1418r846 1424r828 1430w843 1436r870 1442g834 1449g894 1457r870 1463r807 1469g891 1474r873 1480r639 1488r807 1494w801 1501g831 1507g765 1513w774 1519r768 1526r408 1533r798 1539g753 1545g699 1551g963';
const colors = { g: '#36a68c', r: '#e54545', w: '#8b8da3' };
document.getElementById('volume').innerHTML = volume.split(' ').map(bar => {
    const [, x, c, top] = bar.match(/(\d+)([grw])(\d+)/);
    return `<rect x="${x - 2}" y="${top}" width="4" height="${990 - top}" fill="${colors[c]}"/>`;
}).join('');
```
